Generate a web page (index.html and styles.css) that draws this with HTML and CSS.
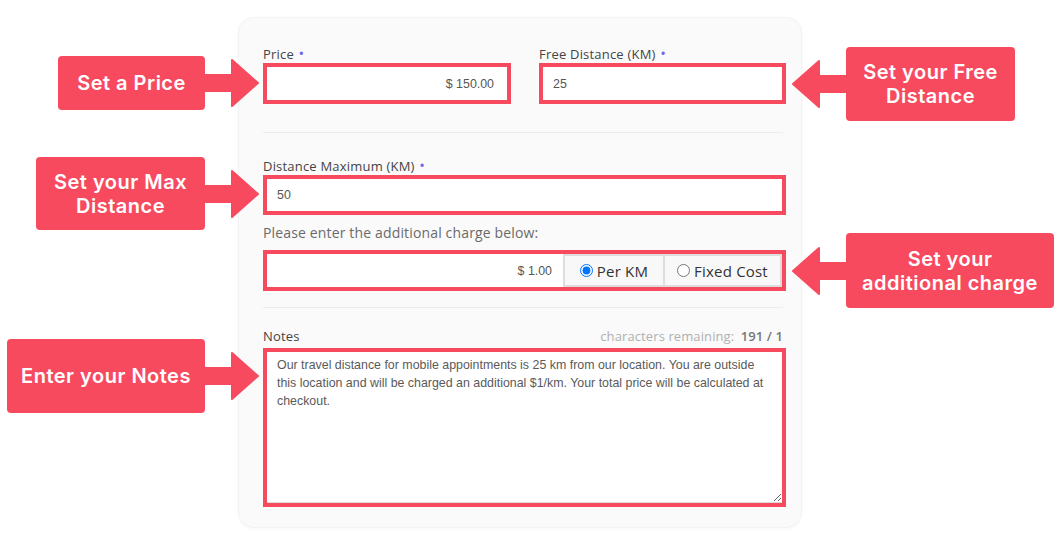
FILE: index.html
```html
<!DOCTYPE html>
<html>
<head>
<meta charset="utf-8">
<link rel="stylesheet" href="styles.css">
</head>
<body>
<div class="page">
  <div class="card">
    <div class="two">
      <div class="field">
        <div class="lbl">Price <span class="req">&bull;</span></div>
        <div class="hl"><div class="inp inp-right">$ 150.00</div></div>
      </div>
      <div class="field">
        <div class="lbl">Free Distance (KM) <span class="req">&bull;</span></div>
        <div class="hl"><div class="inp">25</div></div>
      </div>
    </div>
    <div class="sep sep-1"></div>
    <div class="field">
      <div class="lbl">Distance Maximum (KM) <span class="req">&bull;</span></div>
      <div class="hl hl-max"><div class="inp">50</div></div>
    </div>
    <div class="hint">Please enter the additional charge below:</div>
    <div class="hl charge">
      <div class="inp inp-right charge-inp">$ 1.00</div>
      <label class="opt opt-km"><input type="radio" name="mode" checked> Per KM</label>
      <label class="opt opt-fixed"><input type="radio" name="mode"> Fixed Cost</label>
    </div>
    <div class="sep sep-2"></div>
    <div class="notes-head">
      <div class="lbl">Notes</div>
      <div class="counter">characters remaining: <b>191 / 1</b></div>
    </div>
    <div class="hl hl-notes">
      <textarea class="notes">Our travel distance for mobile appointments is 25 km from our location. You are outside this location and will be charged an additional $1/km. Your total price will be calculated at checkout.</textarea>
    </div>
  </div>

  <div class="callout left c-price">
    <div class="box">Set a Price</div>
    <svg class="arrow" width="54" height="48" viewBox="0 0 54 48"><path d="M0 16 H27 V1 L53 24 L27 47 V32 H0 Z"/></svg>
  </div>
  <div class="callout left c-max">
    <div class="box">Set your Max<br>Distance</div>
    <svg class="arrow" width="54" height="48" viewBox="0 0 54 48"><path d="M0 16 H27 V1 L53 24 L27 47 V32 H0 Z"/></svg>
  </div>
  <div class="callout left c-notes">
    <div class="box">Enter your Notes</div>
    <svg class="arrow" width="54" height="48" viewBox="0 0 54 48"><path d="M0 16 H27 V1 L53 24 L27 47 V32 H0 Z"/></svg>
  </div>
  <div class="callout right c-free">
    <svg class="arrow" width="54" height="48" viewBox="0 0 54 48"><path d="M54 16 H27 V1 L1 24 L27 47 V32 H54 Z"/></svg>
    <div class="box">Set your Free<br>Distance</div>
  </div>
  <div class="callout right c-charge">
    <svg class="arrow" width="54" height="48" viewBox="0 0 54 48"><path d="M54 16 H27 V1 L1 24 L27 47 V32 H54 Z"/></svg>
    <div class="box">Set your<br>additional charge</div>
  </div>
</div>
</body>
</html>
```
FILE: styles.css
```css
* { box-sizing: border-box; }
html, body { margin: 0; padding: 0; background: #ffffff; }
body { width: 1058px; height: 550px; overflow: hidden; font-family: "Open Sans", "Liberation Sans", sans-serif; }

.page { position: relative; width: 1058px; height: 550px; padding-top: 17px; }

.card {
  margin-left: 238px;
  width: 564px;
  height: 511px;
  border-radius: 16px;
  background: #fafafa;
  border: 1px solid #f3f3f5;
  box-shadow: 0 1px 4px rgba(0,0,0,0.035);
  padding: 28px 15px 0 24px;
}

.two { display: grid; grid-template-columns: 248px 247px; column-gap: 28px; }

.lbl {
  font-family: "Open Sans", sans-serif;
  font-size: 13px;
  letter-spacing: 0.2px;
  line-height: 14px;
  height: 14px;
  color: #444;
  white-space: nowrap;
}
.req { color: #7563f2; font-size: 15px; margin-left: 1px; }

.hl {
  margin-top: 3px;
  border: 4px solid #f84a5f;
  background: #fff;
  height: 41px;
}
.hl-max { height: 40px; }

.inp {
  height: 100%;
  display: flex;
  align-items: center;
  padding: 0 10px;
  font-family: "Liberation Sans", Arial, sans-serif;
  font-size: 12.4px;
  color: #555;
}
.inp-right { justify-content: flex-end; padding-right: 13px; }

.sep { height: 1px; background: #ececec; margin-right: 3px; }
.sep-1 { margin-top: 28px; margin-bottom: 25px; }

.hint {
  margin-top: 10px;
  font-family: "Open Sans", sans-serif;
  font-size: 14px;
  letter-spacing: 0.15px;
  line-height: 16px;
  color: #6a6a6a;
}

.charge { margin-top: 9px; display: flex; }
.charge-inp { flex: 1; padding-right: 11px; }
.opt {
  display: flex;
  align-items: center;
  justify-content: center;
  gap: 4px;
  background: #f8f8f8;
  border: 2px solid #dddddd;
  font-family: "Open Sans", sans-serif;
  font-size: 15px;
  letter-spacing: 0.2px;
  color: #333;
}
.opt input { margin: 0; width: 13px; height: 13px; }
.opt-km { width: 102px; }
.opt-fixed { width: 117px; border-left: 0; }

.sep-2 { margin-top: 16px; margin-bottom: 21px; }

.notes-head { display: flex; height: 14px; }
.counter {
  margin-left: auto;
  margin-right: 3px;
  white-space: nowrap;
  font-family: "Open Sans", sans-serif;
  font-size: 13px;
  letter-spacing: 0.1px;
  line-height: 14px;
  color: #b0b0b0;
}
.counter b { color: #777; font-weight: 600; margin-left: 3px; }

.hl-notes { margin-top: 5px; height: 159px; }
.notes {
  display: block;
  width: 100%;
  height: 100%;
  border: 0;
  border-bottom: 1px solid #ddd;
  outline: none;
  resize: vertical;
  padding: 4px 10px;
  font-family: "Liberation Sans", Arial, sans-serif;
  font-size: 12.4px;
  line-height: 18px;
  color: #5a5a5a;
  background: #fff;
}

/* annotation callouts over the screenshot */
.callout { position: absolute; display: flex; align-items: center; }
.callout .box {
  background: #f84a5f;
  color: #fff;
  border-radius: 4px;
  display: flex;
  align-items: center;
  justify-content: center;
  text-align: center;
  font-family: Inter, "Open Sans", sans-serif;
  font-weight: 600;
  font-size: 20px;
  letter-spacing: 0.5px;
  line-height: 24px;
}
.callout .arrow { display: block; flex-shrink: 0; }
.callout .arrow path { fill: #f84a5f; stroke: #f84a5f; stroke-width: 2; stroke-linejoin: round; }

.c-price { left: 58px; top: 56px; }
.c-price .box { width: 147px; height: 54px; }
.c-max { left: 36px; top: 157px; }
.c-max .box { width: 169px; height: 73px; }
.c-notes { left: 7px; top: 339px; }
.c-notes .box { width: 198px; height: 74px; }
.c-free { left: 792px; top: 47px; }
.c-free .box { width: 169px; height: 74px; }
.c-charge { left: 792px; top: 233px; }
.c-charge .box { width: 208px; height: 75px; }
```
